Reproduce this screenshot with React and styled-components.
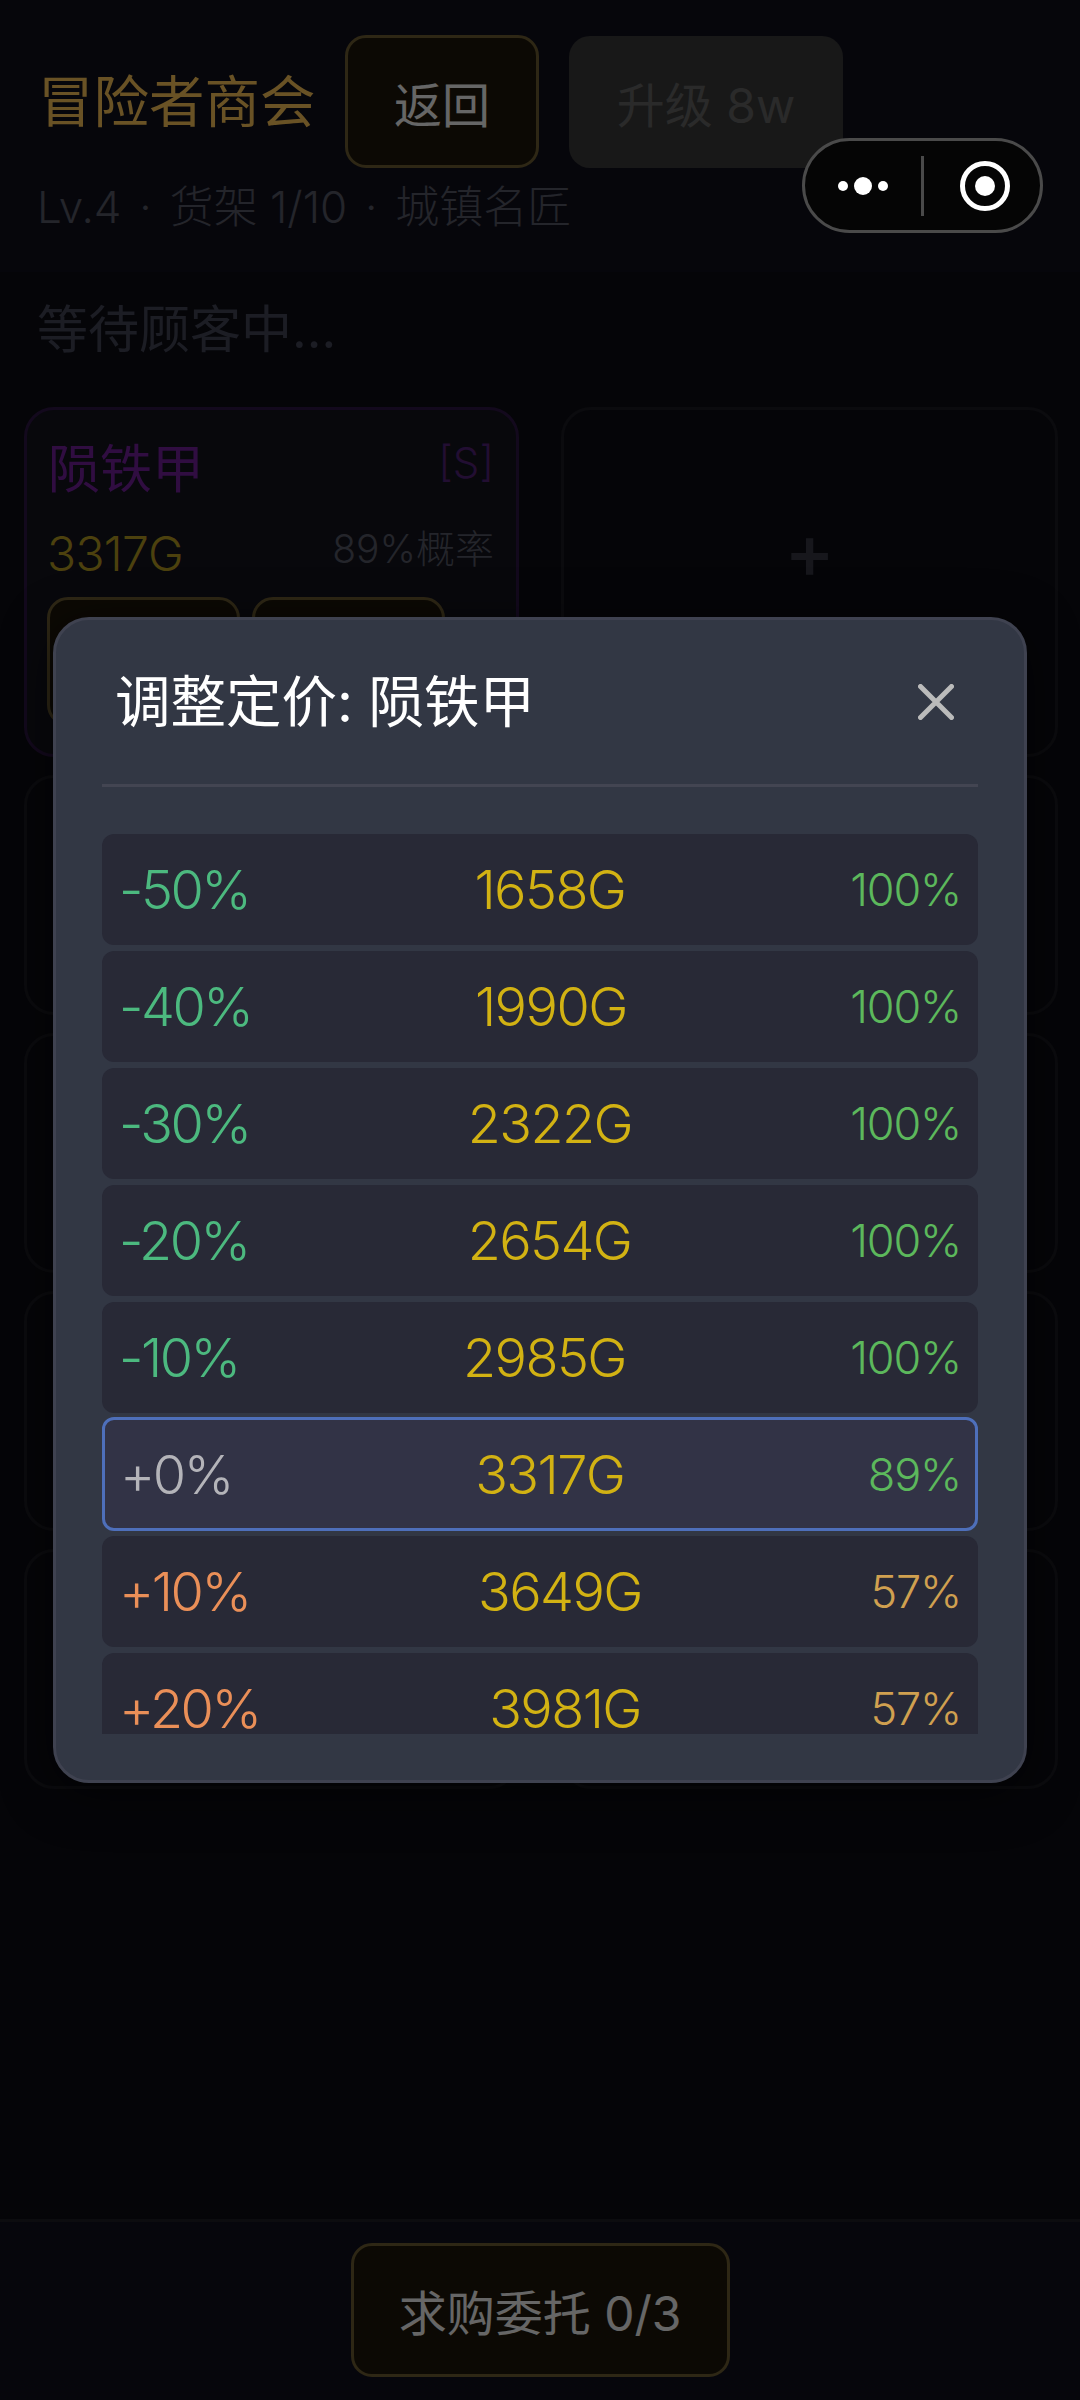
import React from "react";
import styled, { createGlobalStyle } from "styled-components";

const Global = createGlobalStyle`
  html, body { margin: 0; padding: 0; background: #0f0f18; }
  * { box-sizing: border-box; }
  body { font-family: "Inter", "Noto Sans CJK SC", sans-serif; font-weight: 400; }
`;

const Page = styled.div`
  position: relative;
  width: 1080px;
  height: 2400px;
  overflow: hidden;
  display: flex;
  flex-direction: column;
  background: #0c0c13;
`;

const Header = styled.header`
  height: 272px;
  padding: 35px 38px 0;
  background: #0f0f1a;
`;

const TopRow = styled.div`
  display: flex;
  align-items: center;
  gap: 30px;
`;

const Title = styled.h1`
  margin: 0;
  width: 277px;
  font-size: 55.5px;
  line-height: 70px;
  font-weight: 400;
  color: #e8b552;
  white-space: nowrap;
`;

const GoldButton = styled.div`
  display: flex;
  align-items: center;
  justify-content: center;
  width: ${(p) => p.$w}px;
  height: ${(p) => p.$h}px;
  border: 3px solid #665730;
  border-radius: 21px;
  background: #1b1609;
  color: #e3e3e3;
  font-size: 48px;
  white-space: nowrap;
`;

const GreyButton = styled.div`
  display: flex;
  align-items: center;
  justify-content: center;
  width: 274px;
  height: 132px;
  border-radius: 21px;
  background: #363636;
  color: #5e5e5e;
  font-size: 48px;
`;

const SubLine = styled.div`
  margin-top: 14px;
  margin-left: -1px;
  font-size: 44px;
  line-height: 50px;
  font-weight: 300;
  color: #50525f;
  white-space: nowrap;
`;

const Dot = styled.span`
  margin: 0 5.5px;
`;

const Body = styled.main`
  flex: 1;
  padding: 28px 22px 0 24px;
`;

const Waiting = styled.div`
  font-size: 51px;
  line-height: 60px;
  padding-left: 13px;
  color: #3e4050;
`;

const Grid = styled.div`
  margin-top: 47px;
  display: grid;
  grid-template-columns: 495px 497px;
  grid-auto-rows: 240px;
  grid-template-rows: 350px;
  column-gap: 42px;
  row-gap: 18px;
`;

const SlotCard = styled.div`
  border: 3px solid #19191f;
  border-radius: 30px;
`;

const EmptySlot = styled(SlotCard)`
  display: flex;
  align-items: center;
  justify-content: center;
  padding-bottom: 64px;
  color: #33343f;
  font-size: 76px;
  font-weight: 500;
`;

const ItemCard = styled(SlotCard)`
  border-color: #2c1540;
  background: #12121c;
  padding: 29px 22px 0 21px;
`;

const ItemTop = styled.div`
  display: flex;
  justify-content: space-between;
  align-items: flex-start;
`;

const ItemName = styled.div`
  font-size: 52px;
  line-height: 62px;
  color: #6a1e90;
`;

const Grade = styled.div`
  font-size: 42px;
  line-height: 48px;
  font-weight: 300;
  color: #4d1f70;
`;

const ItemMid = styled.div`
  margin-top: 23px;
  margin-left: -1px;
  display: flex;
  justify-content: space-between;
  align-items: flex-start;
`;

const ItemPrice = styled.div`
  font-size: 48px;
  line-height: 60px;
  font-weight: 300;
  letter-spacing: -0.7px;
  color: #a89020;
`;

const Chance = styled.div`
  font-size: 39px;
  line-height: 50px;
  font-weight: 300;
  color: #50525f;
`;

const ItemActions = styled.div`
  margin-top: 13px;
  margin-left: -1px;
  display: flex;
  gap: 12px;
`;

const Footer = styled.footer`
  height: 181px;
  border-top: 3px solid #1b1b22;
  background: #0f0f1b;
  display: flex;
  justify-content: center;
  padding-top: 21px;
`;

const Overlay = styled.div`
  position: absolute;
  inset: 0;
  background: rgba(0, 0, 0, 0.55);
  display: flex;
  align-items: center;
  justify-content: center;
`;

const Modal = styled.div`
  width: 974px;
  height: 1166px;
  padding: 46px;
  border: 3px solid #3f4250;
  border-radius: 36px;
  background: #323744;
  box-shadow: 0 10px 50px rgba(0, 0, 0, 0.55);
  display: flex;
  flex-direction: column;
`;

const ModalHead = styled.div`
  height: 121px;
  padding: 0 24px 46px 13px;
  border-bottom: 3px solid #434552;
  margin-bottom: 47px;
  display: flex;
  align-items: center;
  justify-content: space-between;
  flex-shrink: 0;
`;

const ModalTitle = styled.div`
  font-size: 55.5px;
  line-height: 72px;
  color: #fff;
  font-weight: 400;
`;

const CloseIcon = styled.svg`
  width: 36px;
  height: 36px;
  display: block;
`;

const List = styled.div`
  flex: 1;
  overflow: hidden;
  display: flex;
  flex-direction: column;
`;

const Row = styled.div`
  flex-shrink: 0;
  display: flex;
  align-items: center;
  justify-content: space-between;
  height: ${(p) => (p.$active ? 114 : 111)}px;
  margin: ${(p) => (p.$active ? "-2px 0 5px" : "0 0 6px")};
  padding: ${(p) => (p.$active ? "0 14px 0 15px" : "0 17px 0 17px")};
  border-radius: 12px;
  background: ${(p) => (p.$active ? "#323346" : "#282936")};
  border: ${(p) => (p.$active ? "3px solid #4e6fba" : "0 solid transparent")};
`;

const Delta = styled.span`
  font-size: 54px;
  font-weight: 350;
  letter-spacing: -2.5px;
  color: ${(p) => p.$color};
`;

const Price = styled.span`
  font-size: 54px;
  font-weight: 350;
  letter-spacing: -1.6px;
  color: #d2b213;
`;

const Odds = styled.span`
  font-size: 45px;
  font-weight: 350;
  letter-spacing: -1.2px;
  color: ${(p) => p.$color};
`;

const Capsule = styled.div`
  position: absolute;
  left: 802px;
  top: 138px;
  width: 241px;
  height: 95px;
  border: 3px solid #4a4a4a;
  border-radius: 48px;
  background: #050505;
  display: flex;
  align-items: center;
`;

const CapsuleSide = styled.div`
  flex: 1;
  display: flex;
  align-items: center;
  justify-content: center;
`;

const CapsuleRule = styled.div`
  width: 3px;
  height: 60px;
  background: #4a4a4a;
`;

const CapsuleRing = styled.svg`
  margin-left: 6px;
`;

const rows = [
  ["-50%", "1658G", "100%", "#4cb97f", "#5cb85c"],
  ["-40%", "1990G", "100%", "#4cb97f", "#5cb85c"],
  ["-30%", "2322G", "100%", "#4cb97f", "#5cb85c"],
  ["-20%", "2654G", "100%", "#4cb97f", "#5cb85c"],
  ["-10%", "2985G", "100%", "#4cb97f", "#5cb85c"],
  ["+0%", "3317G", "89%", "#b4b4b9", "#5cb85c", true],
  ["+10%", "3649G", "57%", "#ea8f58", "#d0a050"],
  ["+20%", "3981G", "57%", "#ea8f58", "#d0a050"],
];

export default function App() {
  return (
    <Page>
      <Global />
      <Header>
        <TopRow>
          <Title>冒险者商会</Title>
          <GoldButton $w={194} $h={133}>返回</GoldButton>
          <GreyButton>升级 8w</GreyButton>
        </TopRow>
        <SubLine>Lv.4<Dot> · </Dot>货架 1/10<Dot> · </Dot>城镇名匠</SubLine>
      </Header>
      <Body>
        <Waiting>等待顾客中...</Waiting>
        <Grid>
          <ItemCard>
            <ItemTop>
              <ItemName>陨铁甲</ItemName>
              <Grade>[S]</Grade>
            </ItemTop>
            <ItemMid>
              <ItemPrice>3317G</ItemPrice>
              <Chance>89%概率</Chance>
            </ItemMid>
            <ItemActions>
              <GoldButton $w={193} $h={129} />
              <GoldButton $w={193} $h={129} />
            </ItemActions>
          </ItemCard>
          <EmptySlot>+</EmptySlot>
          {Array.from({ length: 8 }, (_, i) => <SlotCard key={i} />)}
        </Grid>
      </Body>
      <Footer>
        <GoldButton $w={379} $h={134}>求购委托 0/3</GoldButton>
      </Footer>
      <Overlay>
        <Modal>
          <ModalHead>
            <ModalTitle>调整定价: 陨铁甲</ModalTitle>
            <CloseIcon viewBox="0 0 36 36">
              <path d="M2.5 2.5 L33.5 33.5 M33.5 2.5 L2.5 33.5" stroke="#bbbbbb" strokeWidth="5" strokeLinecap="round" fill="none" />
            </CloseIcon>
          </ModalHead>
          <List>
            {rows.map(([d, p, o, dc, oc, active]) => (
              <Row key={d} $active={active}>
                <Delta $color={dc}>{d}</Delta>
                <Price>{p}</Price>
                <Odds $color={oc}>{o}</Odds>
              </Row>
            ))}
          </List>
        </Modal>
      </Overlay>
      <Capsule>
        <CapsuleSide>
          <svg width="50" height="20" viewBox="0 0 50 20">
            <circle cx="5" cy="10" r="5" fill="#fff" />
            <circle cx="25" cy="10" r="9" fill="#fff" />
            <circle cx="45" cy="10" r="5" fill="#fff" />
          </svg>
        </CapsuleSide>
        <CapsuleRule />
        <CapsuleSide>
          <CapsuleRing width="50" height="50" viewBox="0 0 50 50">
            <circle cx="25" cy="25" r="22.5" fill="none" stroke="#fff" strokeWidth="5" />
            <circle cx="25" cy="25" r="10" fill="#fff" />
          </CapsuleRing>
        </CapsuleSide>
      </Capsule>
    </Page>
  );
}
